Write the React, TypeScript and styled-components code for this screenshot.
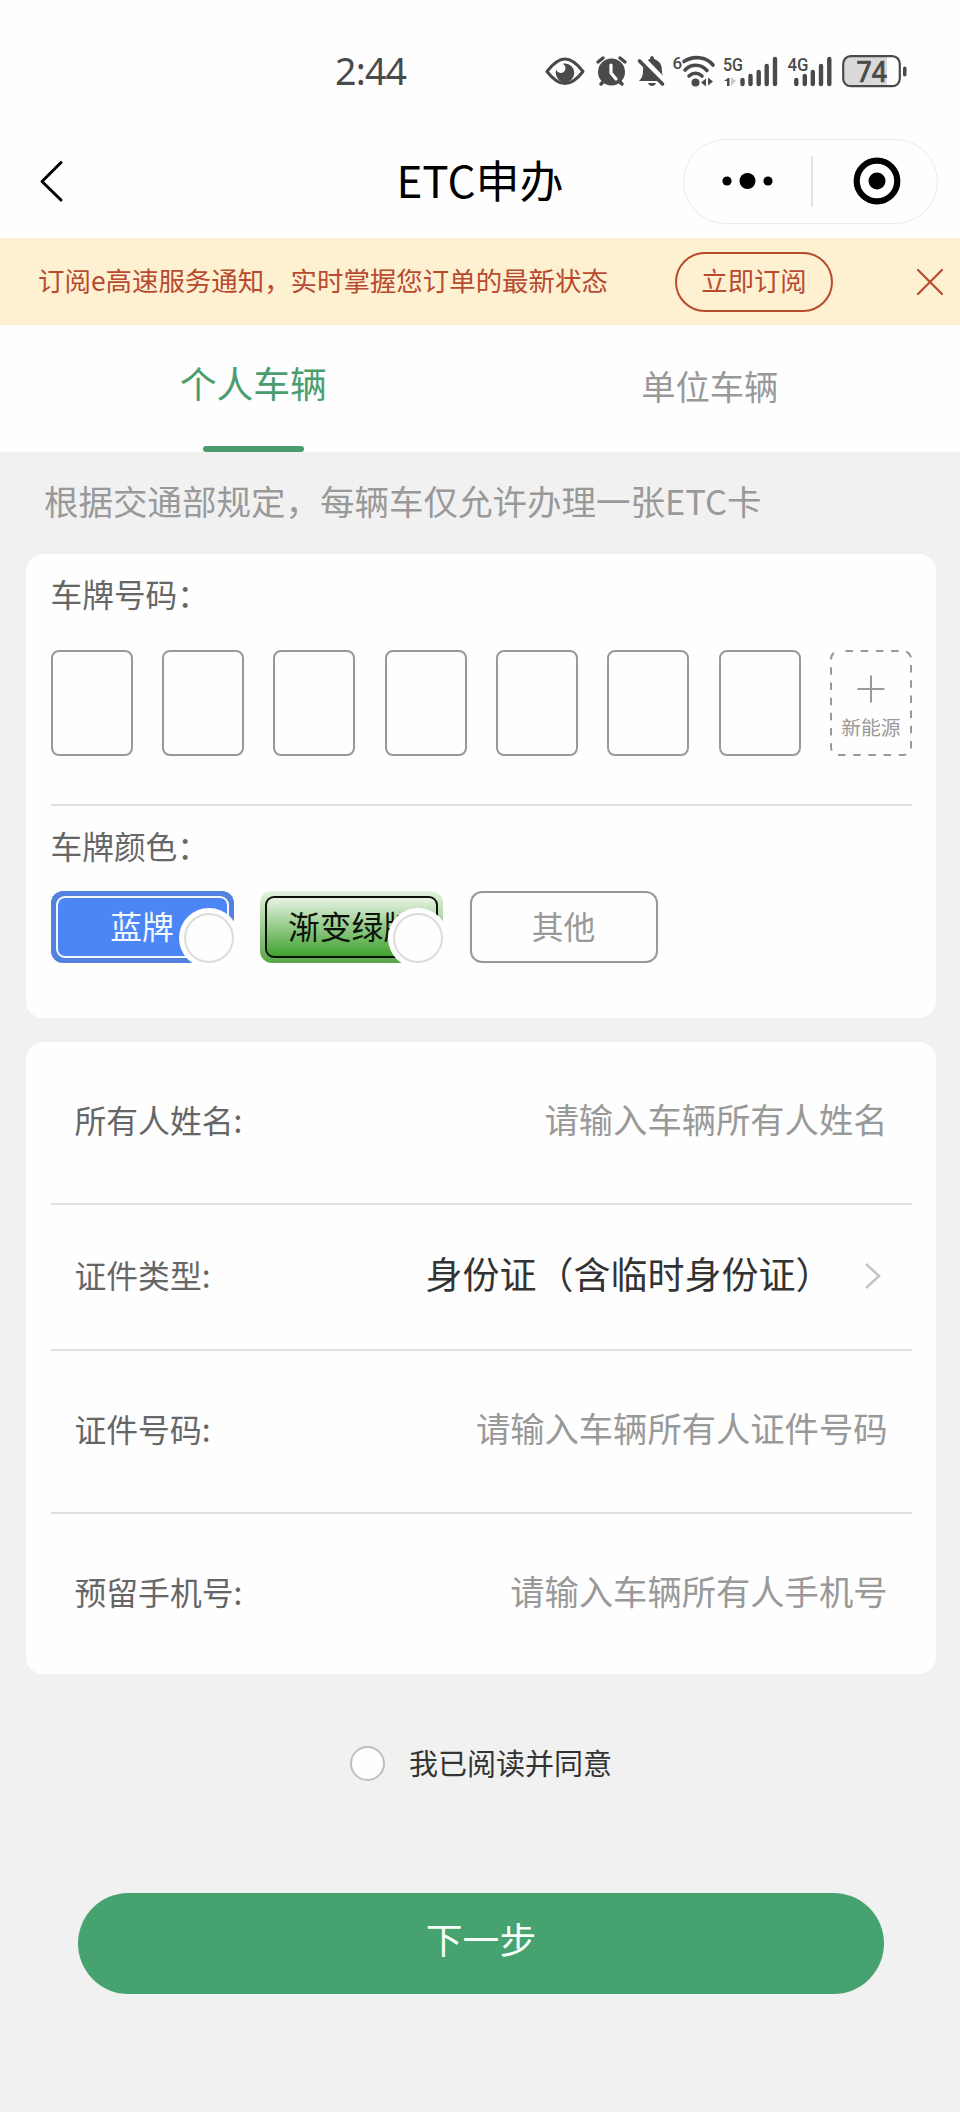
import React from 'react';
import styled, { createGlobalStyle } from 'styled-components';

const GlobalStyle = createGlobalStyle`
  *, *::before, *::after { box-sizing: border-box; }
  body {
    margin: 0;
    background: #f1f1f1;
    font-family: "Noto Sans CJK SC", sans-serif;
    font-weight: 400;
  }
  button { font-family: inherit; cursor: pointer; }
`;

const Page = styled.div`
  width: 960px;
  height: 2112px;
  display: flex;
  flex-direction: column;
  background: #f1f1f1;
  overflow: hidden;
`;

const StatusBar = styled.div`
  height: 124px;
  padding: 18px 0 0 335px;
  display: flex;
  align-items: center;
  background: #fefefe;
  flex: none;
`;

const Clock = styled.div`
  width: 204px;
  font-family: "Noto Sans", sans-serif;
  font-size: 37.5px;
  line-height: 40px;
  letter-spacing: -0.8px;
  color: #4a4a4a;
`;

const StatusIcons = styled.svg`
  width: 376px;
  height: 44px;
  display: block;
`;

const NavBar = styled.header`
  height: 114px;
  padding: 0 22px 0 32px;
  display: grid;
  grid-template-columns: 255px 1fr 255px;
  align-items: center;
  background: #fefefe;
  flex: none;
`;

const BackButton = styled.button`
  border: 0;
  padding: 0;
  background: none;
  width: 48px;
  height: 48px;
`;

const Title = styled.h1`
  margin: 0;
  padding: 0 10px 4px 0;
  text-align: center;
  font-size: 44px;
  line-height: 56px;
  font-weight: 400;
  color: #000;
`;

const Capsule = styled.div`
  width: 255px;
  height: 85px;
  border: 1.5px solid #ebebeb;
  border-radius: 43px;
  display: grid;
  grid-template-columns: 127px 1px 1fr;
  align-items: center;
  justify-items: center;
`;

const CapsuleDivider = styled.span`
  width: 2px;
  height: 51px;
  background: #e3e3e3;
`;

const CapsuleClose = styled.svg`
  width: 48px;
  height: 48px;
  margin-left: 5px;
`;

const Notice = styled.section`
  height: 87px;
  padding: 0 16px 0 38px;
  display: flex;
  align-items: center;
  background: #fef1d2;
  color: #b84a30;
  font-size: 26.45px;
  flex: none;
`;

const NoticeText = styled.span`
  width: 637px;
  padding-bottom: 4px;
  white-space: nowrap;
`;

const SubscribeButton = styled.button`
  width: 158px;
  height: 60px;
  padding: 0 0 5px;
  border: 2px solid #b84a30;
  border-radius: 30px;
  background: none;
  color: inherit;
  font-size: 26.35px;
`;

const CloseButton = styled.button`
  margin-left: auto;
  padding: 0;
  border: 0;
  background: none;
  width: 28px;
  height: 28px;
`;

const Tabs = styled.nav`
  height: 127px;
  padding: 0 22px 0 25px;
  display: grid;
  grid-template-columns: 1fr 1fr;
  background: #fefefe;
  flex: none;
`;

const Tab = styled.div<{ $active?: boolean }>`
  display: flex;
  flex-direction: column;
  align-items: center;
  justify-content: space-between;
  padding-top: ${p => (p.$active ? 30 : 33)}px;
  font-size: ${p => (p.$active ? 36.8 : 34.3)}px;
  line-height: 54px;
  color: ${p => (p.$active ? '#4b9d6e' : '#999')};
`;

const TabLine = styled.span`
  width: 101px;
  height: 6px;
  border-radius: 3px;
  background: #4b9d6e;
`;

const Hint = styled.p`
  margin: 0;
  height: 102px;
  padding: 0 44px 6px;
  line-height: 96px;
  font-size: 34.5px;
  color: #999;
  flex: none;
`;

const Card = styled.section<{ $height: number; $gap?: number }>`
  margin: ${p => p.$gap ?? 0}px 24px 0 26px;
  height: ${p => p.$height}px;
  padding: 0 24px 0 24.5px;
  border-radius: 17px;
  background: #fefefe;
  display: flex;
  flex-direction: column;
  flex: none;
`;

const GroupLabel = styled.div`
  margin-top: 17px;
  height: 44px;
  line-height: 44px;
  font-size: 31.7px;
  color: #666;
`;

const PlateRow = styled.div`
  margin: 35px 0 48px;
  display: flex;
  justify-content: space-between;
`;

const PlateCell = styled.div`
  width: 82px;
  height: 106px;
  border: 2px solid #999;
  border-radius: 8px;
`;

const EnergyCell = styled.div`
  position: relative;
  width: 82px;
  height: 106px;
  padding-top: 25px;
  display: flex;
  flex-direction: column;
  align-items: center;
  color: #999;
  font-size: 19.8px;
  line-height: 24px;
  gap: 12px;
  white-space: nowrap;
`;

const DashedFrame = styled.svg`
  position: absolute;
  inset: 0;
`;

const Divider = styled.div`
  height: 2px;
  background: #dfdfdf;
  flex: none;
`;

const ColorRow = styled.div`
  margin-top: 24px;
  display: flex;
  gap: 26.5px;
`;

const ColorPlate = styled.div<{ $frame: string; $ink: string }>`
  position: relative;
  width: 183px;
  height: 72px;
  padding: 5px;
  border-radius: 12px;
  background: ${p => p.$frame};
  color: ${p => p.$ink};
`;

const PlateFace = styled.div<{ $bg: string }>`
  height: 62px;
  padding-bottom: 4px;
  border: 2px solid currentColor;
  border-radius: 9px;
  background: ${p => p.$bg};
  display: flex;
  align-items: center;
  justify-content: center;
  font-size: 31.8px;
  white-space: nowrap;
`;

const Radio = styled.span`
  position: absolute;
  right: -5px;
  bottom: -5px;
  width: 60px;
  height: 60px;
  padding: 5px;
  border-radius: 50% 50% 12px 50%;
  background: #fefefe;

  &::before {
    content: "";
    display: block;
    height: 50px;
    border: 2px solid #dcdcdc;
    border-radius: 50%;
  }
`;

const OtherPlate = styled.div`
  width: 188px;
  height: 72px;
  padding-bottom: 4px;
  border: 2px solid #999;
  border-radius: 12px;
  display: flex;
  align-items: center;
  justify-content: center;
  font-size: 31.8px;
  color: #999;
`;

const Field = styled.div<{ $height: number }>`
  height: ${p => p.$height}px;
  padding: 0 24.5px 6px 24px;
  display: flex;
  align-items: center;
  justify-content: space-between;
`;

const FieldLabel = styled.span`
  font-size: 31.8px;
  color: #666;
`;

const Placeholder = styled.span`
  font-size: 34.3px;
  color: #999;
  padding-bottom: 2px;
`;

const SelectValue = styled.span`
  display: flex;
  align-items: center;
  gap: 32px;
  padding: 0 7px 2px 0;
  font-size: 37px;
  color: #333;
  line-height: 54px;
`;

const Chevron = styled.svg`
  width: 16px;
  height: 28px;
  margin-top: 6px;
`;

const Agreement = styled.label`
  margin-top: 69px;
  height: 42px;
  padding-left: 350px;
  display: flex;
  align-items: center;
  gap: 24px;
  font-size: 29px;
  line-height: 38px;
  color: #333;
`;

const AgreeText = styled.span`
  padding-bottom: 4px;
`;

const AgreeCircle = styled.span`
  width: 35px;
  height: 35px;
  border: 2px solid #bfbfbf;
  border-radius: 50%;
  background: #fefefe;
`;

const NextButton = styled.button`
  margin: 108px 76px 0 78px;
  height: 101px;
  padding: 0 0 10px;
  border: 0;
  border-radius: 51px;
  background: #46a26e;
  color: #f6fff9;
  font-size: 36.8px;
  flex: none;
`;

const ink = '#4a4a4a';

function StatusGlyphs() {
  return (
    <StatusIcons viewBox="540 48 376 44" fill={ink}>
      <path d="M548 70.500C556 60 562 58 566 58S576 60 584 70.500C576 81 570 82.500 566 82.500S556 81 548 70.500Z" fill="none" stroke={ink} strokeWidth="3" strokeLinejoin="round" />
      <path d="M566 62.500a9.300 9.300 0 1 1-9.300 9.300c0-1 .2-2 .5-3a4.800 4.800 0 1 0 6.500-6c.7-.2 1.500-.3 2.300-.3Z" />

      <circle cx="612.500" cy="71" r="13.500" />
      <path d="M599 61l5-4M626 61l-5-4M602 83l3-3M623 83l-3-3" stroke={ink} strokeWidth="3.500" strokeLinecap="round" />
      <path d="M612 64v8l5 6" fill="none" stroke="#fefefe" strokeWidth="3.200" strokeLinecap="round" strokeLinejoin="round" />

      <path d="M640 80c3-3 4-6 4-10 0-8 3-11 7-12 0-4 4-4 4 0 6 2 8 6 8 12 0 4 1 7 4 10Z" />
      <path d="M649 82h8c-1 4-7 4-8 0Z" />
      <path d="M642 57l25 26" stroke="#fefefe" strokeWidth="7" />
      <path d="M640.500 60l23 23" stroke={ink} strokeWidth="3.600" strokeLinecap="round" />

      <text x="673.500" y="68" fontFamily="Roboto, sans-serif" fontWeight="500" fontSize="17">6</text>
      <g fill="none" stroke={ink} strokeWidth="3.600" strokeLinecap="round">
        <path d="M685 60.500c9-6 22-5 29 3.500" />
        <path d="M686 69c6-6.500 16-6.500 22 .5" />
        <path d="M690 75c4-3.500 9-3.500 13 0" />
      </g>
      <circle cx="696.500" cy="81.500" r="4" />
      <path d="M702 81.500l5-4v8ZM709 76.500v9M709 76.500l5 4-5 4Z" />

      <text x="724" y="69.500" fontFamily="Roboto, sans-serif" fontWeight="500" fontSize="18.500" textLength="20" lengthAdjust="spacingAndGlyphs">5G</text>
      <path d="M725 80l4-3h1.500v8h-2.500v-5Z" />
      <path d="M732 76v9l5-5Z" fill="#c9c9c9" />
      <g stroke={ink} strokeWidth="4.400" strokeLinecap="round">
        <path d="M743.500 79v4M751.500 75v8M759.700 71v12M767.700 65v18M776 58v25" />
        <path d="M797.300 79v4M805.800 75v8M813.800 71v12M822 65v18M830.300 58v25" />
      </g>
      <text x="788.500" y="69.500" fontFamily="Roboto, sans-serif" fontWeight="500" fontSize="18.500" textLength="21" lengthAdjust="spacingAndGlyphs">4G</text>

      <path d="M852 56h36v28h-36q-7 0-7-7v-14q0-7 7-7Z" fill="#d9d9d9" />
      <rect x="844.200" y="55.200" width="56.600" height="30" rx="7.500" fill="none" stroke={ink} strokeWidth="2.200" />
      <rect x="904" y="65.500" width="3.500" height="10" rx="1.700" />
      <text x="857.500" y="80.500" fontFamily='"Noto Sans", sans-serif' fontWeight="500" fontSize="28" textLength="30.500" lengthAdjust="spacingAndGlyphs" stroke={ink} strokeWidth="0.600">74</text>
    </StatusIcons>
  );
}

const fields = [
  { label: '所有人姓名:', placeholder: '请输入车辆所有人姓名', height: 161 },
  { label: '证件类型:', value: '身份证（含临时身份证）', height: 144 },
  { label: '证件号码:', placeholder: '请输入车辆所有人证件号码', height: 161 },
  { label: '预留手机号:', placeholder: '请输入车辆所有人手机号', height: 160 },
];

export default function App() {
  return (
    <Page>
      <GlobalStyle />
      <StatusBar>
        <Clock>2:44</Clock>
        <StatusGlyphs />
      </StatusBar>

      <NavBar>
        <BackButton aria-label="返回">
          <svg width="48" height="48" viewBox="0 0 48 48" fill="none" stroke="#000" strokeWidth="3" strokeLinecap="round" strokeLinejoin="round" display="block">
            <path d="M29 5.500L10 24.500l19 18.500" />
          </svg>
        </BackButton>
        <Title>ETC申办</Title>
        <Capsule>
          <svg width="52" height="18" viewBox="0 0 52 18">
            <circle cx="5" cy="9" r="4.600" />
            <circle cx="25.500" cy="9" r="8" />
            <circle cx="46" cy="9" r="4.600" />
          </svg>
          <CapsuleDivider />
          <CapsuleClose viewBox="0 0 48 48">
            <circle cx="24" cy="24" r="20.300" fill="none" stroke="#000" strokeWidth="6.200" />
            <circle cx="24" cy="24" r="8.500" />
          </CapsuleClose>
        </Capsule>
      </NavBar>

      <Notice>
        <NoticeText>订阅e高速服务通知，实时掌握您订单的最新状态</NoticeText>
        <SubscribeButton>立即订阅</SubscribeButton>
        <CloseButton aria-label="关闭">
          <svg width="28" height="28" viewBox="0 0 28 28" stroke="#b84a30" strokeWidth="2.200" strokeLinecap="round" display="block">
            <path d="M2 2l24 24M26 2L2 26" />
          </svg>
        </CloseButton>
      </Notice>

      <Tabs>
        <Tab $active>
          个人车辆
          <TabLine />
        </Tab>
        <Tab>单位车辆</Tab>
      </Tabs>

      <Hint>根据交通部规定，每辆车仅允许办理一张ETC卡</Hint>

      <Card $height={464}>
        <GroupLabel>车牌号码：</GroupLabel>
        <PlateRow>
          {[0, 1, 2, 3, 4, 5, 6].map(i => (
            <PlateCell key={i} />
          ))}
          <EnergyCell>
            <DashedFrame width="82" height="106" fill="none" stroke="#999" strokeWidth="2">
              <rect x="1" y="1" width="80" height="104" rx="8" strokeDasharray="7.500 7.700" strokeDashoffset="-6.500" />
            </DashedFrame>
            <svg width="28" height="28" viewBox="0 0 28 28" stroke="#999" strokeWidth="2">
              <path d="M14 .5v27M.5 14h27" />
            </svg>
            新能源
          </EnergyCell>
        </PlateRow>
        <Divider />
        <GroupLabel>车牌颜色：</GroupLabel>
        <ColorRow>
          <ColorPlate $frame="#5281de" $ink="#f4f8ff">
            <PlateFace $bg="#4c85f5">蓝牌</PlateFace>
            <Radio />
          </ColorPlate>
          <ColorPlate $frame="linear-gradient(#e2f3e0, #58a548)" $ink="#0c130a">
            <PlateFace $bg="linear-gradient(#e8f3e4, #3fa22d)">渐变绿牌</PlateFace>
            <Radio />
          </ColorPlate>
          <OtherPlate>其他</OtherPlate>
        </ColorRow>
      </Card>

      <Card $height={632} $gap={23.5}>
        {fields.map((f, i) => (
          <React.Fragment key={f.label}>
            {i > 0 && <Divider />}
            <Field $height={f.height}>
              <FieldLabel>{f.label}</FieldLabel>
              {f.value ? (
                <SelectValue>
                  {f.value}
                  <Chevron viewBox="0 0 16 28" fill="none" stroke="#c4c4c4" strokeWidth="2.500">
                    <path d="M1 2l13 12L1 26" />
                  </Chevron>
                </SelectValue>
              ) : (
                <Placeholder>{f.placeholder}</Placeholder>
              )}
            </Field>
          </React.Fragment>
        ))}
      </Card>

      <Agreement>
        <AgreeCircle />
        <AgreeText>我已阅读并同意</AgreeText>
      </Agreement>

      <NextButton>下一步</NextButton>
    </Page>
  );
}
